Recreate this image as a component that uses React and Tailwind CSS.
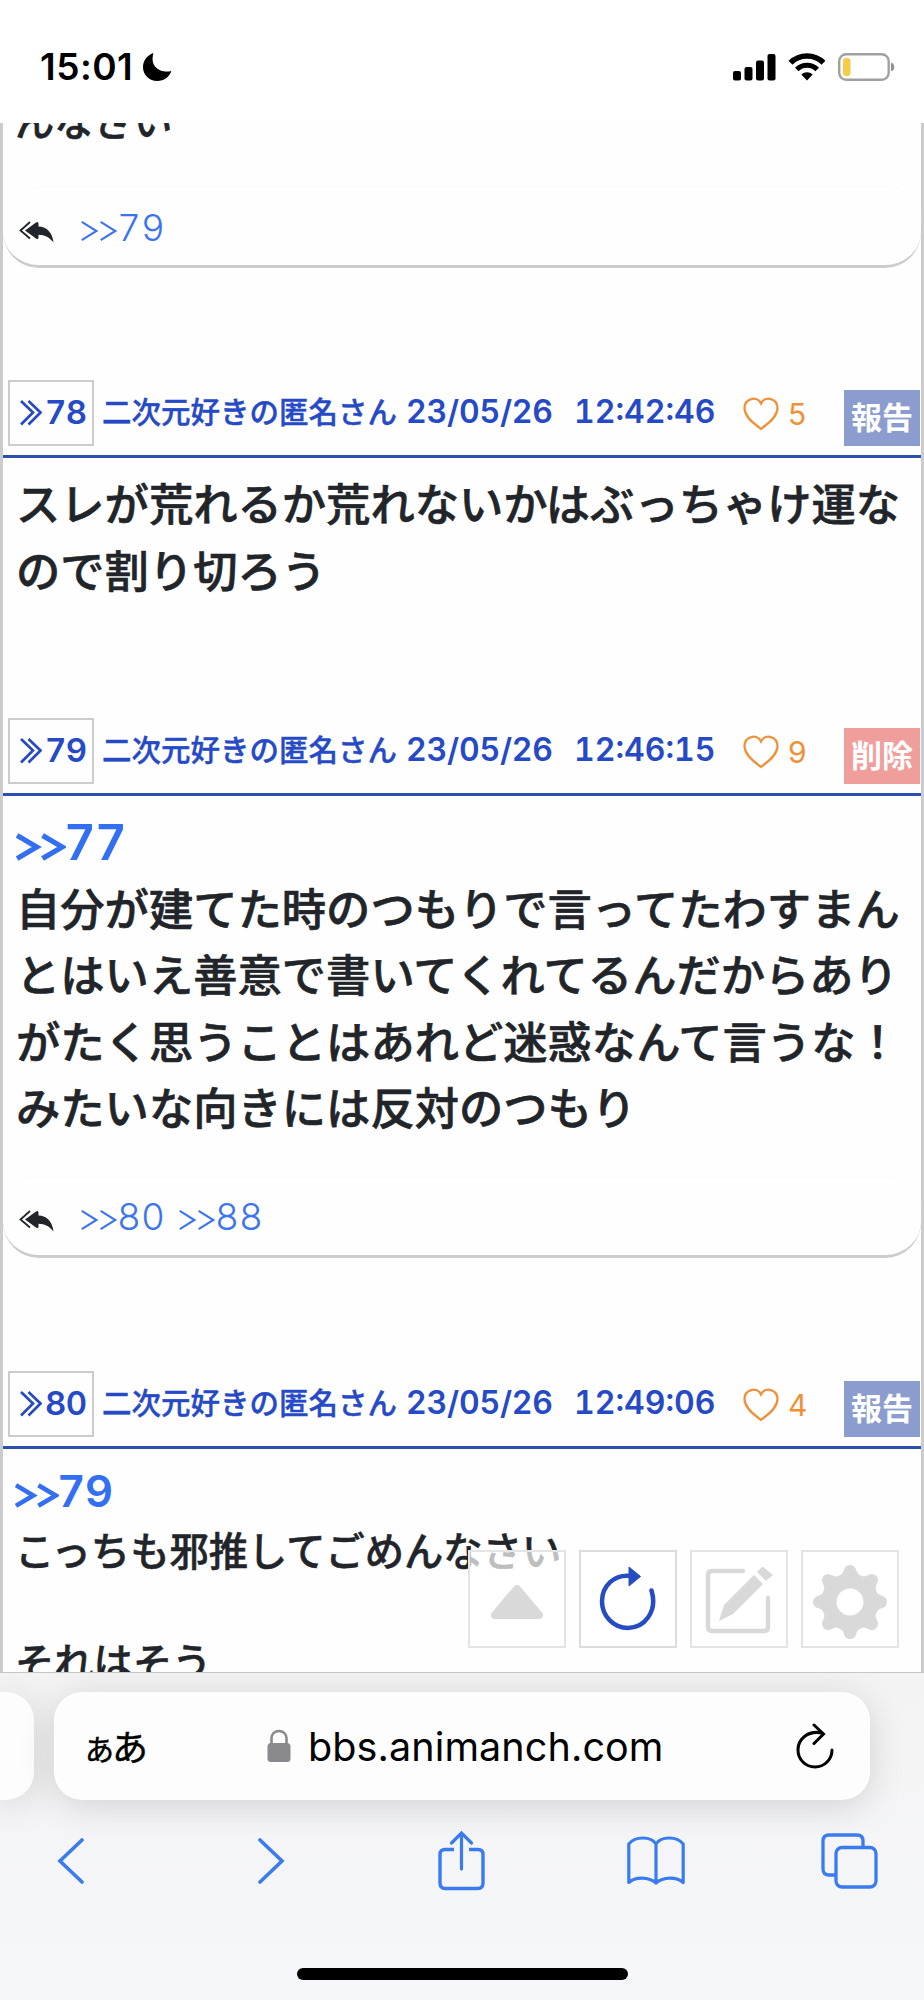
function StatusBar() {
  return (
    <div className="h-[123px] shrink-0 flex items-start justify-between pl-[40px] pr-[28px] pt-[46px] bg-white text-black">
      <div className="flex items-center">
        <span className="font-['Inter',sans-serif] font-semibold text-[37px] leading-[42px] w-[96px] tracking-[0.5px] whitespace-nowrap">15:01</span>
        <svg className="ml-[6px]" width="30" height="30" viewBox="0 0 30 30">
          <path d="M11.500 1C4.500 3.500 1 9 1 15.200C1 23 7.500 29 15.200 29C22 29 27.500 25 29.300 19C20 21.500 7 16 11.500 1Z" fill="currentColor" />
        </svg>
      </div>
      <div className="flex items-start pt-[7px]">
        <svg width="43" height="28" viewBox="0 0 43 28">
          <rect x="0" y="18" width="8" height="9.500" rx="2" />
          <rect x="11.500" y="14" width="8" height="13.500" rx="2" />
          <rect x="23" y="7.500" width="8" height="20" rx="2" />
          <rect x="34.500" y="1" width="8" height="26.500" rx="2" />
        </svg>
        <svg className="ml-[12px]" width="38" height="28" viewBox="0 0 38 28">
          <path d="M2.500 9.800A23.500 23.500 0 0 1 35.500 9.800" fill="none" stroke="currentColor" strokeWidth="5.500" />
          <path d="M8.800 16.500A14.500 14.500 0 0 1 29.200 16.500" fill="none" stroke="currentColor" strokeWidth="5" />
          <path d="M19 27.500L13.300 21.500A8.300 8.300 0 0 1 24.700 21.500Z" />
        </svg>
        <svg className="ml-[12px]" width="58" height="28" viewBox="0 0 58 28">
          <rect x="1.200" y="1.200" width="49.500" height="25.600" rx="7" fill="none" stroke="#a0a0a0" strokeWidth="2.400" />
          <rect x="5" y="5" width="7.500" height="18" rx="3" fill="#f6cb45" />
          <path d="M53 9.500C57.300 11 57.300 17 53 18.500Z" fill="#8f8f8f" />
        </svg>
      </div>
    </div>
  );
}

function Arrows({ className, stroke }) {
  return (
    <svg className={className} viewBox="0 0 48 28" preserveAspectRatio="none">
      <path d="M1 2.500L20 14L1 25.500M25.500 2.500L44.500 14L25.500 25.500" fill="none" stroke="currentColor" strokeWidth={stroke} />
    </svg>
  );
}

function ReplyBox({ refs }) {
  return (
    <div className="h-[81px] flex items-center rounded-[36px] border-b-[3px] border-[#cccccc] pl-[16px] shadow-[0_-1px_1px_rgba(0,0,0,0.02)]">
      <svg className="mt-[11px]" width="35" height="22" viewBox="0 0 35 22">
        <path d="M11 1L1.500 9.500L11 17.500" fill="none" stroke="#212529" strokeWidth="1.800" />
        <path d="M6 9.500L17 1.500Q19.500 0 19.500 3V5.500C28 5.500 33.500 12 34.500 21.500C30.500 16.500 26 14 19.500 13.800V16.500Q19.500 19 17 17.500Z" fill="#212529" />
      </svg>
      <div className="ml-[27px] mt-[3px] flex gap-[16px] text-[#3b74f0] font-['Inter',sans-serif] font-light text-[37px] leading-[48px]">
        {refs.map((n) => (
          <a key={n} className="flex items-center">
            <Arrows className="w-[37px] h-[22px] mt-[6px]" stroke={2.7} />
            <span className="-ml-[1px] w-[46px] tabular-nums">{n}</span>
          </a>
        ))}
      </div>
    </div>
  );
}

function PostHeader({ no, date, time, likes, label, labelClass }) {
  return (
    <div className="h-[78px] flex items-start border-b-[3px] border-[#2b50b0] pl-[5px] text-[#264ac6]">
      <div className="w-[86px] h-[66px] border-[2.500px] border-[#cccccc] flex items-start pl-[10px] pt-[10px]">
        <svg className="mt-[8px]" width="22" height="26" viewBox="0 0 22 26">
          <path d="M1 1L13 12.500L1 24.500M8.500 1L20.500 12.500L8.500 24.500" fill="none" stroke="currentColor" strokeWidth="2.700" />
        </svg>
        <span className="ml-[3px] font-['Inter',sans-serif] font-semibold tabular-nums text-[33px] leading-[40px] tracking-[-0.5px]">{no}</span>
      </div>
      <span className="ml-[8px] mt-[8px] w-[304px] font-medium text-[29.500px] leading-[44px] whitespace-nowrap [-webkit-text-stroke:0.4px]">二次元好きの匿名さん</span>
      <span className="mt-[12px] w-[168px] font-['Inter',sans-serif] font-semibold tabular-nums text-[32px] leading-[40px] tracking-[-0.2px] whitespace-nowrap">{date}</span>
      <span className="mt-[12px] w-[157px] font-['Inter',sans-serif] font-semibold tabular-nums text-[32px] leading-[40px] whitespace-nowrap">{time}</span>
      <div className="flex items-start text-[#ee9138]">
        <svg className="ml-[12px] mt-[17px]" width="36" height="34" viewBox="0 0 36 34">
          <path d="M18 32C14 28.500 2 21.500 1.500 11.500C1.500 1 14 -1.500 18 6.500C22 -1.500 34.500 1 34.500 11.500C34 21.500 22 28.500 18 32Z" fill="none" stroke="currentColor" strokeWidth="2.300" />
        </svg>
        <span className="ml-[9px] mt-[14px] font-['Inter',sans-serif] text-[30px] leading-[40px]">{likes}</span>
      </div>
      <span className={`ml-auto mr-[1px] mt-[10px] w-[76px] h-[56px] text-center text-white font-bold text-[31px] leading-[51px] ${labelClass}`}>{label}</span>
    </div>
  );
}

function BigLine({ children }) {
  return (
    <p className="relative -top-[2px] pl-[13px] h-[66.500px] leading-[66.500px] text-[44.300px] font-medium whitespace-nowrap [-webkit-text-stroke:0.6px]">{children}</p>
  );
}

function FloatingTools() {
  return (
    <div className="absolute right-[22px] bottom-[24px] flex gap-[13px] text-[#d9d9d9]">
      <div className="size-[98px] border-2 border-[#e4e4e4] bg-white/70 flex items-center justify-center">
        <svg width="54" height="36" viewBox="0 0 54 36" className="mt-[6px]">
          <path d="M5 31L27 5L49 31Z" fill="currentColor" stroke="currentColor" strokeWidth="8" strokeLinejoin="round" />
        </svg>
      </div>
      <div className="size-[98px] border-2 border-[#dcdcdc] bg-white flex items-center justify-center">
        <svg width="60" height="66" viewBox="0 0 60 66" className="text-[#264cc4] -mt-[2px]">
          <path d="M33 11C16 9 4 21 4 36.500C4 51 15.500 63 30 63C46 63 60 47 53.500 25.500" fill="none" stroke="currentColor" strokeWidth="4.500" strokeLinecap="round" />
          <path d="M31 2L42.500 11.500L31 21Z" fill="currentColor" stroke="currentColor" strokeLinejoin="round" />
        </svg>
      </div>
      <div className="size-[98px] border-2 border-[#e4e4e4] bg-white flex items-center justify-center">
        <svg width="70" height="70" viewBox="0 0 70 70" className="mt-[2px]">
          <path d="M39 6H8Q4 6 4 10V62Q4 66 8 66H60Q64 66 64 62V33" fill="none" stroke="currentColor" strokeWidth="4.500" strokeLinecap="round" />
          <path d="M15 56L20 40L50 10L59 19L29 49Z" fill="currentColor" />
          <path d="M53 7L58.500 1.500L69 10L62 16Z" fill="currentColor" />
        </svg>
      </div>
      <div className="size-[98px] border-2 border-[#e4e4e4] bg-white flex items-center justify-center">
        <svg width="76" height="76" viewBox="-38 -38 76 76" className="mt-[5px] shrink-0">
          <circle r="21" fill="none" stroke="currentColor" strokeWidth="15" />
          {[0, 45, 90, 135, 180, 225, 270, 315].map((deg) => (
            <path key={deg} d="M-11 -26Q-8 -27 -6.500 -31Q-5 -37 0 -37Q5 -37 6.500 -31Q8 -27 11 -26Z" fill="currentColor" transform={`rotate(${deg})`} />
          ))}
        </svg>
      </div>
    </div>
  );
}

function BrowserBar() {
  return (
    <div className="h-[328px] shrink-0 relative overflow-hidden border-t border-[#c6c6c6] bg-gradient-to-b from-[#f3f3f3] to-[#f6f7fa]">
      <div className="flex pt-[19px]">
        <div className="w-[34px] h-[108px] rounded-r-[28px] bg-[#fdfdfd] shadow-[0_6px_36px_rgba(0,0,0,0.14)]" />
        <div className="ml-[20px] w-[816px] h-[108px] rounded-[28px] bg-[#fdfdfd] shadow-[0_6px_36px_rgba(0,0,0,0.14)] flex items-center pl-[31px] pr-[36px] text-black">
          <div className="w-[182px] flex items-baseline font-['Noto_Sans_CJK_JP',sans-serif] leading-[50px] [-webkit-text-stroke:0.5px]">
            <span className="text-[29px]">あ</span>
            <span className="text-[36px] -ml-[2px]">あ</span>
          </div>
          <svg width="24" height="34" viewBox="0 0 24 34" className="text-[#8a8a8e]">
            <path d="M4.500 16V9.500C4.500 -0.500 19.500 -0.500 19.500 9.500V16" fill="none" stroke="currentColor" strokeWidth="2.600" />
            <rect x="0.500" y="14" width="23" height="19" rx="3.500" fill="currentColor" />
          </svg>
          <span className="ml-[17px] mt-[2px] font-['Inter',sans-serif] text-[39.500px] leading-[50px] tracking-[0.1px]">bbs.animanch.com</span>
          <svg className="ml-auto" width="38" height="46" viewBox="0 0 38 46">
            <path d="M26 10C12 7 2 16 2 27C2 36.500 9.500 44 19 44C28.500 44 36 36.500 36 27" fill="none" stroke="currentColor" strokeWidth="3" strokeLinecap="round" />
            <path d="M18 2L27.500 11L18 20.500" fill="none" stroke="currentColor" strokeWidth="3" strokeLinecap="round" />
          </svg>
        </div>
      </div>
      <div className="flex items-center mt-[30px] h-[62px] pl-[57px] text-[#3a7bf0]">
        <svg width="28" height="46" viewBox="0 0 28 46">
          <path d="M25 2L3 23L25 44" fill="none" stroke="currentColor" strokeWidth="3.600" strokeLinecap="round" />
        </svg>
        <svg className="ml-[172px]" width="28" height="46" viewBox="0 0 28 46">
          <path d="M3 2L25 23L3 44" fill="none" stroke="currentColor" strokeWidth="3.600" strokeLinecap="round" />
        </svg>
        <svg className="ml-[152px]" width="48" height="62" viewBox="0 0 48 62">
          <path d="M17 19.500H8Q3 19.500 3 24.500V53Q3 58.500 8 58.500H41Q46 58.500 46 53V24.500Q46 19.500 41 19.500H32" fill="none" stroke="currentColor" strokeWidth="3.400" />
          <path d="M24.500 39V3M14.500 13L24.500 3L34.500 13" fill="none" stroke="currentColor" strokeWidth="3.200" strokeLinecap="round" />
        </svg>
        <svg className="ml-[142px]" width="58" height="50" viewBox="0 0 58 50">
          <path d="M29 8C24 0 8 0 1.800 8V46.500C8 40.500 22 40.500 29 47C36 40.500 50 40.500 56.200 46.500V8C50 0 34 0 29 8V47" fill="none" stroke="currentColor" strokeWidth="3.200" strokeLinejoin="round" />
        </svg>
        <svg className="ml-[136px]" width="57" height="56" viewBox="0 0 57 56">
          <path d="M14 42H8Q2 42 2 36V8Q2 2 8 2H36Q42 2 42 8V14" fill="none" stroke="currentColor" strokeWidth="3.300" />
          <rect x="15" y="14.500" width="40" height="39.500" rx="6" fill="none" stroke="currentColor" strokeWidth="3.300" />
        </svg>
      </div>
      <div className="absolute left-[297px] bottom-[20px] w-[331px] h-[12px] rounded-full bg-black" />
    </div>
  );
}

export default function App() {
  return (
    <div className="w-[924px] h-[2000px] flex flex-col overflow-hidden bg-white text-[#212529]">
      <StatusBar />
      <main className="relative flex-1 overflow-hidden border-x-[3px] border-[#cccccc] bg-[#fefefe] font-['Noto_Sans_CJK_JP',sans-serif]">
        <p className="-mt-[32px] h-[56px] pl-[12px] leading-[56px] text-[39.300px] font-medium [-webkit-text-stroke:0.5px]">んなさい</p>
        <div className="mt-[40px]">
          <ReplyBox refs={['79']} />
        </div>
        <div className="mt-[112px]">
          <PostHeader no="78" date="23/05/26" time="12:42:46" likes="5" label="報告" labelClass="bg-[#8a9dce]" />
          <div className="pt-[13px]">
            <BigLine>スレが荒れるか荒れないかはぶっちゃけ運な</BigLine>
            <BigLine>ので割り切ろう</BigLine>
          </div>
        </div>
        <div className="mt-[114px]">
          <PostHeader no="79" date="23/05/26" time="12:46:15" likes="9" label="削除" labelClass="bg-[#f09e9c]" />
          <div className="pt-[13px]">
            <a className="flex items-center h-[66.500px] pl-[13px] text-[#336ff2] font-['Inter',sans-serif] font-semibold tabular-nums tracking-[-0.8px] text-[49px]">
              <Arrows className="w-[50px] h-[28px] mt-[9px]" stroke={5} />
              <span className="-ml-[2px]">77</span>
            </a>
            <BigLine>自分が建てた時のつもりで言ってたわすまん</BigLine>
            <BigLine>とはいえ善意で書いてくれてるんだからあり</BigLine>
            <BigLine>がたく思うことはあれど迷惑なんて言うな！</BigLine>
            <BigLine>みたいな向きには反対のつもり</BigLine>
          </div>
          <div className="mt-[35px]">
            <ReplyBox refs={['80', '88']} />
          </div>
        </div>
        <div className="mt-[113px]">
          <PostHeader no="80" date="23/05/26" time="12:49:06" likes="4" label="報告" labelClass="bg-[#8a9dce]" />
          <div className="pt-[13px] text-[39.300px] font-medium leading-[55.500px] whitespace-nowrap">
            <a className="flex items-center h-[60px] pl-[12px] text-[#336ff2] font-['Inter',sans-serif] font-semibold tabular-nums tracking-[-0.8px] text-[44px]">
              <Arrows className="w-[44px] h-[25px] mt-[8px]" stroke={5} />
              <span className="-ml-[2px]">79</span>
            </a>
            <p className="-mt-px pl-[12px] [-webkit-text-stroke:0.5px]">こっちも邪推してごめんなさい</p>
            <p className="pl-[12px] mt-[55.500px] [-webkit-text-stroke:0.5px]">それはそう</p>
          </div>
        </div>
        <FloatingTools />
      </main>
      <BrowserBar />
    </div>
  );
}
